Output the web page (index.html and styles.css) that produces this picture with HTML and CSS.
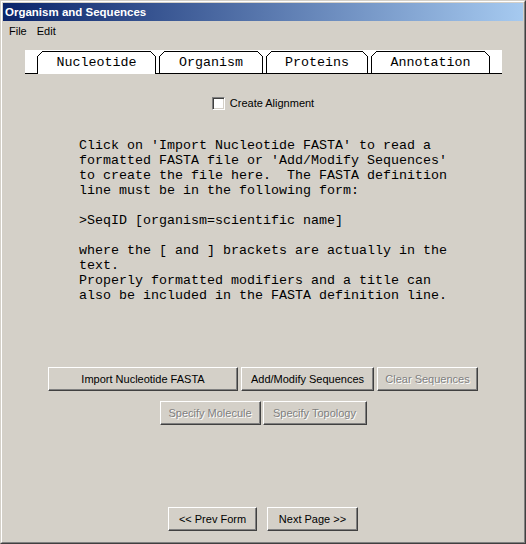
FILE: index.html
```html
<!DOCTYPE html>
<html>
<head>
<meta charset="utf-8">
<title>Organism and Sequences</title>
<link rel="stylesheet" href="styles.css">
</head>
<body>
<div class="window">
  <div class="frame">
    <div class="titlebar"><span class="title">Organism and Sequences</span></div>
    <div class="menubar">
      <span class="menu-item">File</span>
      <span class="menu-item">Edit</span>
    </div>
    <div class="tabstrip">
      <div class="tab tab-nuc selected">Nucleotide</div>
      <div class="tab tab-org">Organism</div>
      <div class="tab tab-prot">Proteins</div>
      <div class="tab tab-ann">Annotation</div>
    </div>
    <div class="check-row">
      <span class="checkbox"></span>
      <span class="check-label">Create Alignment</span>
    </div>
    <div class="info">Click on 'Import Nucleotide FASTA' to read a
formatted FASTA file or 'Add/Modify Sequences'
to create the file here.  The FASTA definition
line must be in the following form:

&gt;SeqID [organism=scientific name]

where the [ and ] brackets are actually in the
text.
Properly formatted modifiers and a title can
also be included in the FASTA definition line.</div>
    <div class="btn-row row-1">
      <button class="btn btn-import">Import Nucleotide FASTA</button>
      <button class="btn btn-add">Add/Modify Sequences</button>
      <button class="btn btn-clear" disabled>Clear Sequences</button>
    </div>
    <div class="btn-row row-2">
      <button class="btn btn-mol" disabled>Specify Molecule</button>
      <button class="btn btn-topo" disabled>Specify Topology</button>
    </div>
    <div class="btn-row row-nav">
      <button class="btn btn-prev">&lt;&lt; Prev Form</button>
      <button class="btn btn-next">Next Page &gt;&gt;</button>
    </div>
  </div>
</div>
</body>
</html>
```
FILE: styles.css
```css
html, body {
  margin: 0;
  padding: 0;
  background: #d4d0c8;
}

body {
  font-family: "Liberation Sans", Arial, sans-serif;
  font-size: 11px;
  color: #000;
}

.window {
  width: 526px;
  height: 544px;
  box-sizing: border-box;
  border: 1px solid;
  border-color: #d4d0c8 #404040 #404040 #d4d0c8;
  background: #d4d0c8;
}

.frame {
  height: 100%;
  box-sizing: border-box;
  border: 1px solid;
  border-color: #fff #808080 #808080 #fff;
  padding: 1px;
  display: flex;
  flex-direction: column;
}

.titlebar {
  height: 18px;
  background: linear-gradient(to right, #0a246a, #a6caf0);
  display: flex;
  align-items: flex-start;
}

.title {
  color: #fff;
  font-weight: bold;
  font-size: 11.5px;
  line-height: 18px;
  padding-left: 2px;
}

.menubar {
  height: 19px;
  padding: 1px 0 0 1px;
  display: flex;
}

.menu-item {
  padding: 0 5px;
  line-height: 19px;
}

.tabstrip {
  margin: 9px 0 0 22px;
  width: 477px;
  height: 24px;
  box-sizing: border-box;
  padding: 1px 0 0 12px;
  background: #fff;
  border-bottom: 1px solid #000;
  display: flex;
  align-items: flex-end;
  gap: 3px;
}

.tab {
  position: relative;
  height: 22px;
  box-sizing: border-box;
  border: 1px solid #000;
  border-bottom: none;
  padding-top: 1px;
  background: #fff;
  font-family: "Liberation Mono", "Courier New", monospace;
  font-size: 13.333px;
  line-height: 20px;
  text-align: center;
}

.tab::before,
.tab::after {
  content: "";
  position: absolute;
  top: -1px;
  width: 6px;
  height: 6px;
}

.tab::before {
  left: -1px;
  background: linear-gradient(to bottom right, #fff 0, #fff calc(50% - 0.6px), #000 calc(50% - 0.6px), #000 calc(50% + 0.6px), transparent calc(50% + 0.6px));
}

.tab::after {
  right: -1px;
  background: linear-gradient(to bottom left, #fff 0, #fff calc(50% - 0.6px), #000 calc(50% - 0.6px), #000 calc(50% + 0.6px), transparent calc(50% + 0.6px));
}

.tab.selected {
  height: 23px;
  margin-bottom: -1px;
  z-index: 1;
}

.tab-nuc { width: 119px; }
.tab-org { width: 104px; }
.tab-prot { width: 102px; }
.tab-ann { width: 119px; }

.check-row {
  margin-top: 23px;
  height: 13px;
  display: flex;
  justify-content: center;
  align-items: center;
}

.checkbox {
  width: 13px;
  height: 13px;
  box-sizing: border-box;
  border: 1px solid;
  border-color: #808080 #fff #fff #808080;
  box-shadow: inset 1px 1px #404040, inset -1px -1px #d4d0c8;
  background: #fff;
}

.check-label {
  margin-left: 5px;
  line-height: 13px;
}

.info {
  margin: 28px 0 0 76px;
  white-space: pre;
  font-family: "Liberation Mono", "Courier New", monospace;
  font-size: 13.333px;
  line-height: 15px;
}

.btn-row {
  display: flex;
  justify-content: center;
}

.row-1 {
  margin-top: 64px;
  gap: 3px;
}

.row-2 {
  margin-top: 10px;
  gap: 2px;
}

.row-nav {
  margin-top: 82px;
  gap: 10px;
}

.btn {
  height: 24px;
  box-sizing: border-box;
  margin: 0;
  padding: 0;
  border: 1px solid;
  border-color: #fff #404040 #404040 #fff;
  box-shadow: inset -1px -1px #808080;
  background: #d4d0c8;
  font-family: "Liberation Sans", Arial, sans-serif;
  font-size: 11px;
  line-height: 20px;
  color: #000;
  text-align: center;
  border-radius: 0;
}

.btn:disabled {
  color: #808080;
  text-shadow: 1px 1px #fff;
}

.btn-import { width: 190px; }
.btn-add { width: 133px; }
.btn-clear { width: 101px; }
.btn-mol { width: 101px; }
.btn-topo { width: 104px; }
.btn-prev { width: 89px; }
.btn-next { width: 91px; }
```
